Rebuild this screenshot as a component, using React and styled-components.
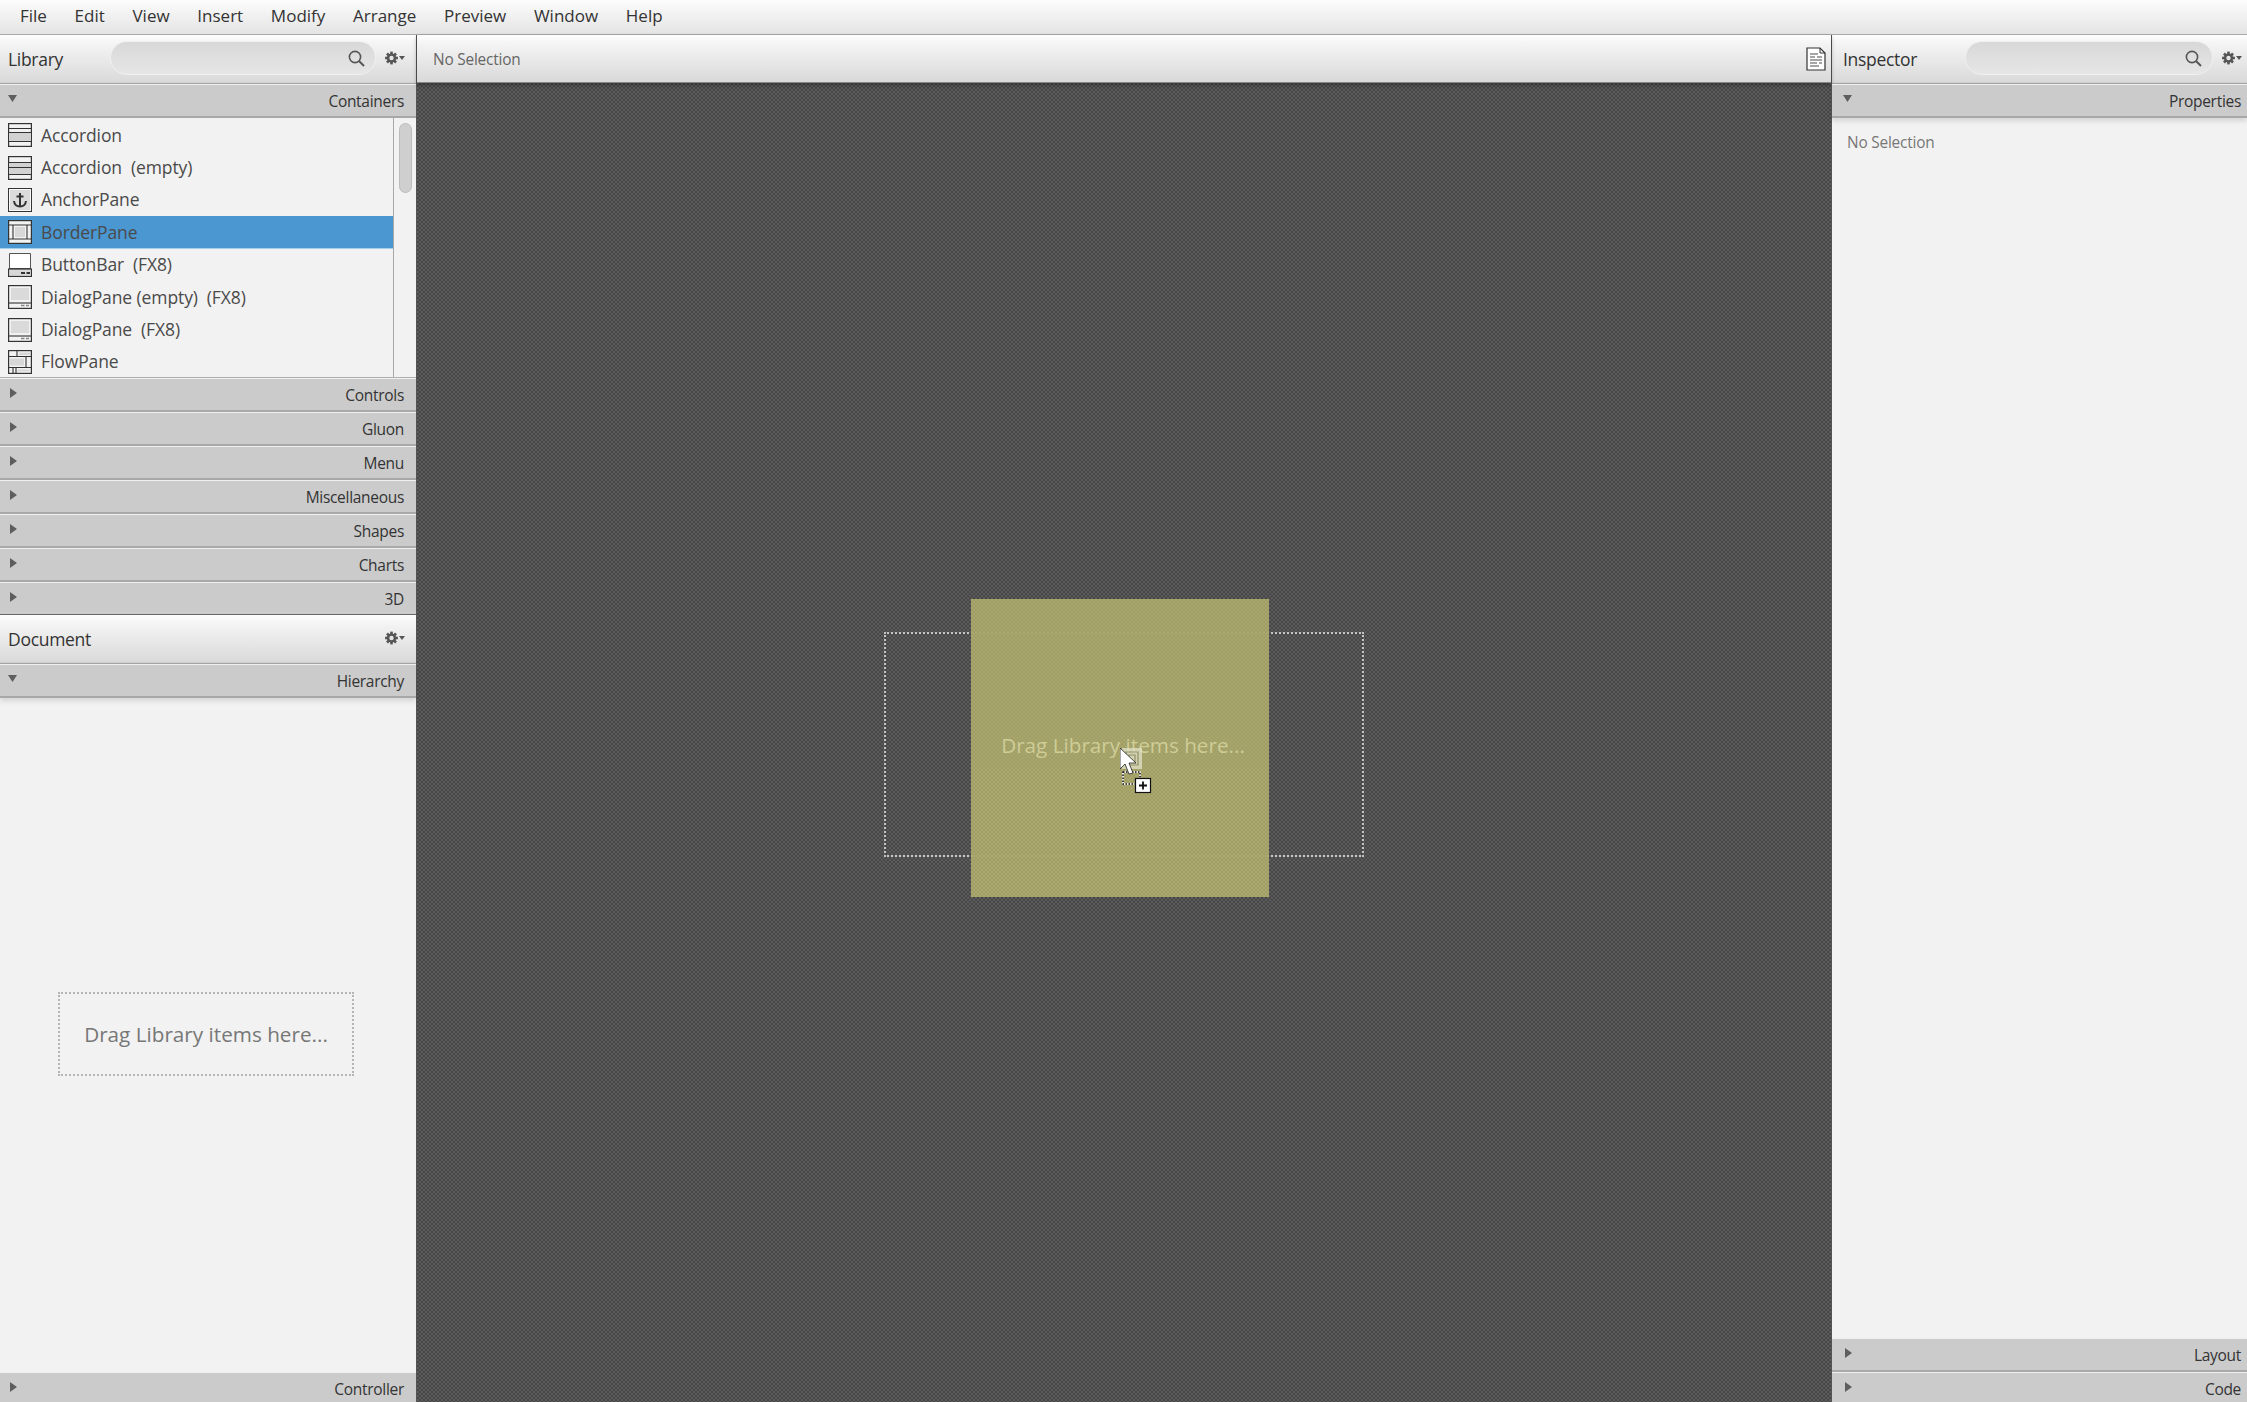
import React from "react";
import styled, { createGlobalStyle } from "styled-components";

const Global = createGlobalStyle`
  html, body { margin: 0; padding: 0; height: 100%; }
  body { font-family: "Open Sans", "Noto Sans", "Liberation Sans", sans-serif; color: #333; background: #f2f2f2; }
  #root { height: 100%; }
`;

const Shell = styled.div`
  display: flex; flex-direction: column; height: 1402px; width: 2247px; overflow: hidden; position: relative;
`;
const MenuBar = styled.nav`
  height: 35px; flex: none; display: flex; align-items: center; gap: 27.7px; padding: 0 0 3px 20px; box-sizing: border-box;
  background: linear-gradient(#fcfcfc, #e4e4e4); border-bottom: 1px solid #a9a9a9;
`;
const MenuItem = styled.span`
  font-size: 17px; color: #333; line-height: 30px;
`;
const Workspace = styled.div`
  flex: 1; min-height: 0; display: flex;
`;
const SideColumn = styled.aside`
  flex: none; width: ${p => p.$width}px; display: flex; flex-direction: column; background: #f2f2f2; min-height: 0;
`;
const CenterColumn = styled.main`
  flex: 1; min-width: 0; display: flex; flex-direction: column;
  border-left: 1px solid #555; border-right: 1px solid #555;
`;
const PanelHeader = styled.header`
  flex: none; height: 48px; display: flex; align-items: center; padding: 0 ${p => p.$right ?? 7}px 0 ${p => p.$left ?? 8}px;
  background: linear-gradient(#fefefe 0%, #f4f4f4 18%, #d9d9d9 100%);
  border-bottom: 1px solid #a6a6a6; box-shadow: inset 0 -1px 0 #d0d0d0;
`;
const PanelTitle = styled.span`
  font-size: 17.5px; letter-spacing: -0.3px; color: #333; flex: 1;
`;
const SearchField = styled.div`
  width: ${p => p.$width}px; height: 34px; box-sizing: border-box; border-radius: 17px; border: 1px solid #f0f0f0;
  background: linear-gradient(#d8d8d8, #e6e6e6); display: flex; align-items: center; justify-content: flex-end;
  padding-right: 10px; margin-right: 9px; margin-top: -2px;
`;
const GearWrap = styled.span`
  display: inline-flex; margin-right: 4px; margin-top: -2px; line-height: 0;
`;
const SectionBar = styled.div`
  flex: none; height: ${p => p.$h || 34}px; box-sizing: border-box; display: flex; align-items: center; justify-content: space-between;
  padding: 1px ${p => p.$right ?? 12}px 0 ${p => p.$left ?? 8}px; background: #cbcbcb;
  border-top: 1px solid #f0f0f0;
  border-bottom: 2px solid #a8a8a8;
  ${p => p.$shadow ? "box-shadow: 0 3px 5px rgba(0,0,0,.12); position: relative; z-index: 1;" : ""}
  ${p => p.$last ? "border-bottom: 1px solid #666;" : ""}
  margin-bottom: ${p => -(p.$clip || 0)}px;
`;
const SectionLabel = styled.span`
  font-size: 15.5px; letter-spacing: -0.3px; color: #333;
`;
const LibraryBody = styled.div`
  flex: none; height: 260px; display: flex; border-bottom: 1px solid #b0b0b0; box-sizing: border-box; overflow: hidden;
`;
const LibraryList = styled.ul`
  flex: 1; margin: 0; padding: 1px 0 0 0; list-style: none; border-right: 1px solid #a8a8a8; overflow: hidden;
`;
const LibraryRow = styled.li`
  height: 32.4px; box-sizing: border-box; display: flex; align-items: center; padding-left: 8px; gap: 9px;
  background: ${p => p.$selected ? "#4a97d2" : "transparent"};
  ${p => p.$selected ? "box-shadow: inset 0 -1px 0 #a6cfee;" : ""}
  font-size: 17.5px; letter-spacing: -0.1px; color: #4a4a4a; white-space: pre;
`;
const RowLabel = styled.span`
  margin-top: -1px;
`;
const ScrollTrack = styled.div`
  flex: none; width: 22px; position: relative; background: #f2f2f2;
`;
const ScrollThumb = styled.div`
  position: absolute; top: 5px; left: 5px; width: 13px; height: 70px; box-sizing: border-box;
  border-radius: 7px; background: #cfcfcf; border: 1px solid #bcbcbc;
`;
const HierarchyBody = styled.div`
  flex: 1; min-height: 0; display: flex; align-items: center; justify-content: center;
`;
const DropHint = styled.div`
  width: 296px; height: 84px; box-sizing: border-box; border: 2px dotted #b5b5b5; display: flex; align-items: center; justify-content: center;
  font-size: 20.7px; color: #777; margin: -3px 4px 0 0;
`;
const StatusBar = styled.div`
  flex: none; height: 48px; box-sizing: border-box; display: flex; align-items: center; justify-content: space-between;
  padding: 0 5px 0 16px;
  background: linear-gradient(#fefefe 0%, #f4f4f4 18%, #d9d9d9 100%);
  border-bottom: 1px solid #888;
  box-shadow: 0 2px 4px rgba(0,0,0,.35);
  position: relative; z-index: 1;
`;
const StatusText = styled.span`
  font-size: 15.4px; letter-spacing: -0.2px; color: #666; margin-top: 1px;
`;
const Canvas = styled.div`
  flex: 1; position: relative; overflow: hidden;
  background: repeating-conic-gradient(#474747 0 25%, #5b5b5b 0 50%) 0 0 / 4px 4px;
`;
const ContentFrame = styled.div`
  position: absolute; left: 554px; top: 516px; width: 298px; height: 298px;
  background: repeating-conic-gradient(#a3a163 0 25%, #aeab72 0 50%) 0 0 / 4px 4px;
  display: flex; align-items: center; justify-content: center;
  font-size: 20.7px; color: #d4d29b; padding: 0 0 6px 6px; box-sizing: border-box;
  opacity: 0.96;
`;
const RootGuide = styled.div`
  position: absolute; left: 467px; top: 549px; width: 480px; height: 225px; box-sizing: border-box;
  border: 2px dotted #c4c4c4; pointer-events: none;
`;
const DragCursor = styled.svg`
  position: absolute; left: 1120px; top: 748px; width: 32px; height: 46px;
`;
const InspectorBody = styled.div`
  flex: 1; min-height: 0; padding: 14px 15px; font-size: 15.4px; letter-spacing: -0.2px; color: #777;
`;
const Tri = styled.svg`
  flex: none; width: 16px; height: 10px; margin-top: -5px; fill: #5e5e5e;
`;
const ItemIcon = styled.svg`
  flex: none; width: 24px; height: 24px;
`;

const Open = () => <Tri viewBox="0 0 16 10"><path d="M0 1h9L4.5 8z" /></Tri>;
const Closed = () => <Tri viewBox="0 0 16 10"><path d="M2 0l7 5-7 5z" /></Tri>;

const Search = () => (
  <svg width="17" height="17" viewBox="0 0 17 17" fill="none" stroke="#555" strokeWidth="1.6">
    <circle cx="7" cy="7" r="5.6" /><path d="M11 11l5 5" strokeWidth="2" />
  </svg>
);
const Gear = () => (
  <svg width="20" height="14" viewBox="0 0 20 14">
    <g fill="#555">
      <circle cx="6.5" cy="7" r="4.6" />
      {[0, 45, 90, 135].map(a => <rect key={a} x="5.2" y="0.6" width="2.6" height="12.8" transform={`rotate(${a} 6.5 7)`} />)}
    </g>
    <circle cx="6.5" cy="7" r="2.2" fill="#e6e6e6" />
    <path d="M14 5h6l-3 4z" fill="#555" />
  </svg>
);
const Frame = ({ children, fill = "#f2f2f2" }) => (
  <ItemIcon viewBox="0 0 24 24" aria-hidden="true">
    <rect x="0.5" y="0.5" width="23" height="23" fill={fill} stroke="#333" strokeWidth="1.4" />
    {children}
  </ItemIcon>
);
const L = "#333";
const Icons = {
  accordion: (
    <Frame>
      <rect x="1" y="10" width="22" height="8" fill="#d2d2d2" />
      <path d="M1 5.500h22M1 9.500h22M1 18.500h22" stroke={L} strokeWidth="1.2" />
    </Frame>
  ),
  accordionEmpty: (
    <Frame>
      <rect x="1" y="7" width="22" height="4" fill="#d2d2d2" />
      <rect x="1" y="12" width="22" height="6" fill="#d2d2d2" />
      <path d="M1 6.500h22M1 11.500h22M1 18.500h22" stroke={L} strokeWidth="1.1" />
    </Frame>
  ),
  anchor: (
    <Frame fill="#dcdcdc">
      <rect x="1.500" y="1.500" width="21" height="21" fill="#dcdcdc" stroke="#f8f8f8" strokeWidth="1" />
      <path d="M12 5v13M8.500 8.500h7M6 13c.5 4 3.500 5.500 6 5.500s5.500-1.500 6-5.500" fill="none" stroke={L} strokeWidth="2" />
    </Frame>
  ),
  border: (
    <Frame>
      <rect x="7" y="7" width="10" height="10" fill="#d8d8d8" />
      <path d="M1 5h22M1 19h22M5 5v14M19 5v14" stroke={L} strokeWidth="1.1" />
    </Frame>
  ),
  buttonBar: (
    <ItemIcon viewBox="0 0 24 24" aria-hidden="true">
      <path d="M1.500 .5h21v15h-21z" fill="#fff" stroke="#555" strokeWidth="1" />
      <rect x="0.500" y="16" width="23" height="7.500" fill="#d8d8d8" stroke="#333" strokeWidth="1.2" />
      <path d="M13 20h4M18.500 20h3.500" stroke="#333" strokeWidth="2" />
    </ItemIcon>
  ),
  dialog: (
    <Frame>
      <rect x="3" y="3" width="18" height="12" fill="#dadada" />
      <path d="M1 18h22" stroke={L} strokeWidth="1.1" />
      <path d="M13 20.500h3.500M18 20.500h3" stroke="#888" strokeWidth="1.4" />
    </Frame>
  ),
  flow: (
    <Frame>
      <rect x="2" y="8.500" width="14" height="7" fill="#d8d8d8" />
      <rect x="11" y="2.500" width="11" height="2.500" fill="#d8d8d8" />
      <rect x="9.500" y="19.500" width="12" height="2" fill="#d8d8d8" />
      <path d="M1 6.500h22M1 17.500h22M9 1v5.500M5 17.500V23M18 6.500v11M8 17.500v5.500" stroke={L} strokeWidth="1.1" />
    </Frame>
  ),
};

const rows = [
  ["accordion", "Accordion"],
  ["accordionEmpty", "Accordion  (empty)"],
  ["anchor", "AnchorPane"],
  ["border", "BorderPane", true],
  ["buttonBar", "ButtonBar  (FX8)"],
  ["dialog", "DialogPane (empty)  (FX8)"],
  ["dialog", "DialogPane  (FX8)"],
  ["flow", "FlowPane"],
];
const closedSections = ["Controls", "Gluon", "Menu", "Miscellaneous", "Shapes", "Charts"];
const menus = ["File", "Edit", "View", "Insert", "Modify", "Arrange", "Preview", "Window", "Help"];

const Section = ({ label, open, ...rest }) => (
  <SectionBar {...rest}>
    {open ? <Open /> : <Closed />}
    <SectionLabel>{label}</SectionLabel>
  </SectionBar>
);

export default function App() {
  return (
    <Shell>
      <Global />
      <MenuBar>{menus.map(m => <MenuItem key={m}>{m}</MenuItem>)}</MenuBar>
      <Workspace>
        <SideColumn $width={416}>
          <PanelHeader>
            <PanelTitle>Library</PanelTitle>
            <SearchField $width={266}><Search /></SearchField>
            <GearWrap><Gear /></GearWrap>
          </PanelHeader>
          <Section label="Containers" open $h={34} />
          <LibraryBody>
            <LibraryList>
              {rows.map(([icon, text, sel]) => (
                <LibraryRow key={text} $selected={sel}>{Icons[icon]}<RowLabel>{text}</RowLabel></LibraryRow>
              ))}
            </LibraryList>
            <ScrollTrack><ScrollThumb /></ScrollTrack>
          </LibraryBody>
          {closedSections.map(s => <Section key={s} label={s} />)}
          <Section label="3D" $last $h={33} />
          <PanelHeader>
            <PanelTitle>Document</PanelTitle>
            <GearWrap><Gear /></GearWrap>
          </PanelHeader>
          <Section label="Hierarchy" open $shadow />
          <HierarchyBody><DropHint>Drag Library items here...</DropHint></HierarchyBody>
          <Section label="Controller" $clip={4} />
        </SideColumn>
        <CenterColumn>
          <StatusBar>
            <StatusText>No Selection</StatusText>
            <svg width="20" height="24" viewBox="0 0 20 24" fill="none">
              <path d="M1 1h13l5 5v17H1z" fill="#fff" stroke="#333" strokeWidth="1.2" />
              <path d="M14 1v5h5" stroke="#333" strokeWidth="1" />
              <path d="M4 7h8M4 10h5M11 10h5M4 13h12M4 16h7M13 16h3M4 19h9" stroke="#888" strokeWidth="1.400" />
            </svg>
          </StatusBar>
          <Canvas>
            <RootGuide />
            <ContentFrame>Drag Library items here...</ContentFrame>
          </Canvas>
        </CenterColumn>
        <SideColumn $width={415}>
          <PanelHeader $left={11} $right={1}>
            <PanelTitle>Inspector</PanelTitle>
            <SearchField $width={248}><Search /></SearchField>
            <GearWrap><Gear /></GearWrap>
          </PanelHeader>
          <Section label="Properties" open $shadow $left={11} $right={6} />
          <InspectorBody>No Selection</InspectorBody>
          <Section label="Layout" $left={11} $right={6} />
          <Section label="Code" $left={11} $right={6} $clip={4} />
        </SideColumn>
      </Workspace>
      <DragCursor viewBox="0 0 32 46" aria-hidden="true">
        <rect x="2" y="0" width="20" height="21" fill="#e6e6d0" fillOpacity="0.7" />
        <path d="M6 4h12v13H6zM9 7h6v7H9z" fill="none" stroke="#8f8f68" strokeWidth="1.200" />
        <rect x="3" y="24" width="17" height="12" fill="none" stroke="#fff" strokeWidth="1.500" />
        <rect x="3" y="24" width="17" height="12" fill="none" stroke="#111" strokeWidth="1.500" strokeDasharray="1.500 1.500" />
        <rect x="15.500" y="30.500" width="15" height="14" fill="#fff" stroke="#111" strokeWidth="1.200" />
        <path d="M23 33.500v8M19 37.500h8" stroke="#111" strokeWidth="1.800" />
        <path d="M0 0v21l5-5 4 10 4-1-4-10h7z" fill="#fff" stroke="#222" strokeWidth="0.800" />
      </DragCursor>
    </Shell>
  );
}
